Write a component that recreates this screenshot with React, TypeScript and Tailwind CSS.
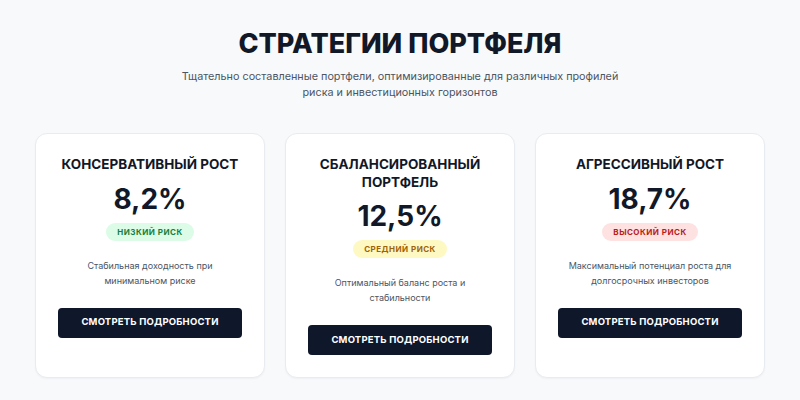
import React from "react";

type Strategy = {
  title: string;
  rate: string;
  risk: string;
  badge: string;
  text: string;
};

const strategies: Strategy[] = [
  {
    title: "Консервативный рост",
    rate: "8,2%",
    risk: "Низкий риск",
    badge: "bg-[#dcfce7] text-[#15803d]",
    text: "Стабильная доходность при минимальном риске",
  },
  {
    title: "Сбалансированный портфель",
    rate: "12,5%",
    risk: "Средний риск",
    badge: "bg-[#fef9c3] text-[#a16207]",
    text: "Оптимальный баланс роста и стабильности",
  },
  {
    title: "Агрессивный рост",
    rate: "18,7%",
    risk: "Высокий риск",
    badge: "bg-[#fee2e2] text-[#b91c1c]",
    text: "Максимальный потенциал роста для долгосрочных инвесторов",
  },
];

function StrategyCard({ s }: { s: Strategy }) {
  return (
    <div className="flex flex-col items-center rounded-xl border border-[#e8ebf0] bg-white p-[22px] text-center shadow-[0_1px_2px_rgba(15,23,42,0.04)]">
      <h3 className="text-[13.5px] font-bold uppercase leading-[17.5px] text-[#111827]">
        {s.title}
      </h3>
      <div className="mt-[9px] text-[28px] font-bold leading-[32px] text-[#111827]">
        {s.rate}
      </div>
      <span
        className={`mt-[8px] rounded-full px-[11px] py-[4px] text-[8px] font-bold uppercase leading-[10px] tracking-[0.06em] ${s.badge}`}
      >
        {s.risk}
      </span>
      <p className="mt-[17px] text-[9px] leading-[15px] text-[#4b5563]">
        {s.text}
      </p>
      <button className="mt-[20px] h-[30px] w-full rounded-[4px] bg-[#0f172a] text-[9.5px] font-bold uppercase tracking-[0.02em] text-white">
        Смотреть подробности
      </button>
    </div>
  );
}

export default function App() {
  return (
    <div
      className="min-h-[400px] w-full bg-[#f8f9fb] pt-[27px]"
      style={{ fontFamily: "Inter, 'Noto Sans', sans-serif" }}
    >
      <div className="mx-auto flex w-[730px] flex-col items-center">
        <h2 className="text-[27px] font-extrabold uppercase leading-[34px] text-[#111827]">
          Стратегии портфеля
        </h2>
        <p className="mt-[8px] w-[450px] text-center text-[10.8px] leading-[16px] text-[#4b5563]">
          Тщательно составленные портфели, оптимизированные для различных профилей
          риска и инвестиционных горизонтов
        </p>
        <div className="mt-[32px] grid w-full grid-cols-3 gap-[20px]">
          {strategies.map((s) => (
            <StrategyCard key={s.title} s={s} />
          ))}
        </div>
      </div>
    </div>
  );
}
